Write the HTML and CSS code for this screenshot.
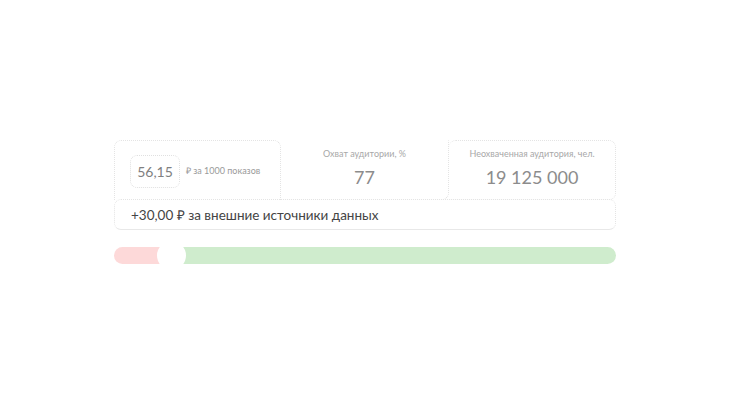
FILE: index.html
```html
<!DOCTYPE html>
<html lang="ru">
<head>
<meta charset="utf-8">
<link rel="stylesheet" href="styles.css">
</head>
<body>
<div class="wrap">
  <div class="stats">
    <div class="card card-price">
      <div class="price-box">56,15</div>
      <div class="price-label">₽ за 1000 показов</div>
    </div>
    <div class="card card-mid">
      <div class="label">Охват аудитории, %</div>
      <div class="value">77</div>
    </div>
    <div class="card card-right">
      <div class="label">Неохваченная аудитория, чел.</div>
      <div class="value">19 125 000</div>
    </div>
  </div>
  <div class="extra">+30,00 ₽ за внешние источники данных</div>
  <div class="slider">
    <div class="bar-red"></div>
    <div class="bar-green"></div>
    <div class="knob"></div>
  </div>
</div>
</body>
</html>
```

FILE: styles.css
```css
html, body {
  margin: 0;
  padding: 0;
  background: #fff;
}
body {
  width: 730px;
  height: 411px;
  font-family: "Lato", "Open Sans", sans-serif;
}
.wrap {
  width: 502px;
  margin-left: 114px;
  padding-top: 140px;
}
.stats {
  display: grid;
  grid-template-columns: 167px 168px 167px;
  height: 60px;
}
.card {
  box-sizing: border-box;
  border: 1px dotted #e4e4e4;
  border-radius: 7px;
}
.card-price {
  display: flex;
  align-items: center;
  padding-left: 15px;
  gap: 6px;
  border-bottom: none;
  border-bottom-left-radius: 0;
  border-bottom-right-radius: 0;
}
.price-box {
  box-sizing: border-box;
  width: 50px;
  height: 33px;
  border: 1px dotted #e0e0e0;
  border-radius: 7px;
  display: flex;
  align-items: center;
  justify-content: center;
  font-size: 14px;
  color: #808080;
  margin-top: 1px;
}
.price-label {
  font-size: 9px;
  color: #9a9a9a;
}
.card-mid, .card-right {
  display: flex;
  flex-direction: column;
  align-items: center;
  padding-top: 7px;
}
.card-mid {
  border-top-color: transparent;
  border-left: none;
  border-radius: 0 0 7px 0;
}
.card-right {
  border-left: none;
  border-bottom-left-radius: 0;
}
.label {
  font-size: 9px;
  color: #a8a8a8;
  line-height: 12px;
}
.value {
  margin-top: 6px;
  font-size: 18px;
  color: #8c8c8c;
  line-height: 22px;
}
.extra {
  box-sizing: border-box;
  height: 31px;
  border: 1px dotted #e4e4e4;
  border-bottom: 1px solid #e8e8e8;
  border-radius: 7px;
  padding-left: 16px;
  display: flex;
  align-items: center;
  font-size: 13.5px;
  color: #444;
  margin-top: -1px;
}
.slider {
  position: relative;
  margin-top: 17px;
  height: 17px;
  display: flex;
}
.bar-red {
  width: 58px;
  background: #fdd9d9;
  border-radius: 9px 0 0 9px;
}
.bar-green {
  flex: 1;
  background: #cfeccd;
  border-radius: 0 9px 9px 0;
}
.knob {
  position: absolute;
  left: 43px;
  top: -6px;
  width: 29px;
  height: 29px;
  border-radius: 50%;
  background: #fff;
}
```
